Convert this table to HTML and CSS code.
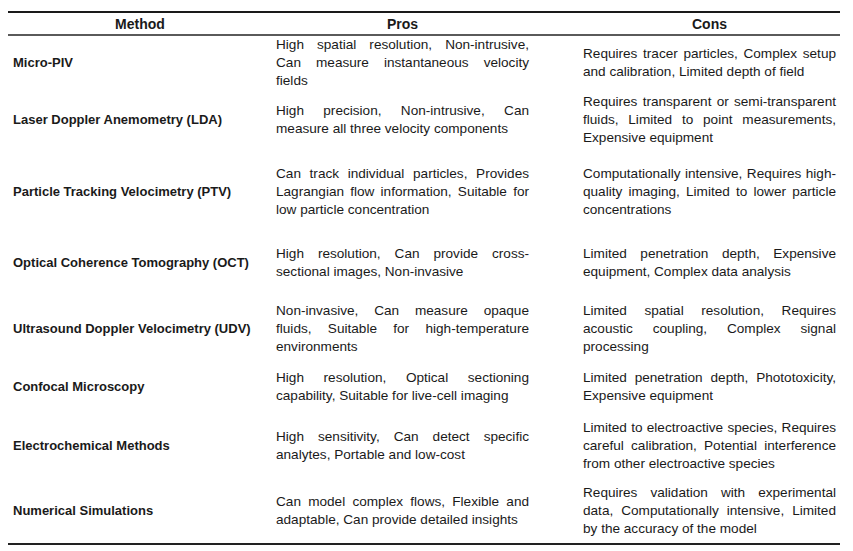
FILE: index.html
```html
<!DOCTYPE html>
<html>
<head>
<meta charset="utf-8">
<link rel="stylesheet" href="styles.css">
</head>
<body>
<div class="tbl">
  <div class="row head">
    <div class="c m">Method</div>
    <div class="c p">Pros</div>
    <div class="c n">Cons</div>
  </div>
  <div class="row r1">
    <div class="c m">Micro-PIV</div>
    <div class="c p">High spatial resolution, Non-intrusive, Can measure instantaneous velocity fields</div>
    <div class="c n">Requires tracer particles, Complex setup and calibration, Limited depth of field</div>
  </div>
  <div class="row r2">
    <div class="c m">Laser Doppler Anemometry (LDA)</div>
    <div class="c p">High precision, Non-intrusive, Can measure all three velocity components</div>
    <div class="c n">Requires transparent or semi-transparent fluids, Limited to point measurements, Expensive equipment</div>
  </div>
  <div class="row r3">
    <div class="c m">Particle Tracking Velocimetry (PTV)</div>
    <div class="c p">Can track individual particles, Provides Lagrangian flow information, Suitable for low particle concentration</div>
    <div class="c n">Computationally intensive, Requires high-quality imaging, Limited to lower particle concentrations</div>
  </div>
  <div class="row r4">
    <div class="c m">Optical Coherence Tomography (OCT)</div>
    <div class="c p">High resolution, Can provide cross-sectional images, Non-invasive</div>
    <div class="c n">Limited penetration depth, Expensive equipment, Complex data analysis</div>
  </div>
  <div class="row r5">
    <div class="c m">Ultrasound Doppler Velocimetry (UDV)</div>
    <div class="c p">Non-invasive, Can measure opaque fluids, Suitable for high-temperature environments</div>
    <div class="c n">Limited spatial resolution, Requires acoustic coupling, Complex signal processing</div>
  </div>
  <div class="row r6">
    <div class="c m">Confocal Microscopy</div>
    <div class="c p">High resolution, Optical sectioning capability, Suitable for live-cell imaging</div>
    <div class="c n">Limited penetration depth, Phototoxicity, Expensive equipment</div>
  </div>
  <div class="row r7">
    <div class="c m">Electrochemical Methods</div>
    <div class="c p">High sensitivity, Can detect specific analytes, Portable and low-cost</div>
    <div class="c n">Limited to electroactive species, Requires careful calibration, Potential interference from other electroactive species</div>
  </div>
  <div class="row r8">
    <div class="c m">Numerical Simulations</div>
    <div class="c p">Can model complex flows, Flexible and adaptable, Can provide detailed insights</div>
    <div class="c n">Requires validation with experimental data, Computationally intensive, Limited by the accuracy of the model</div>
  </div>
</div>
</body>
</html>
```
FILE: styles.css
```css
html, body {
  margin: 0;
  padding: 0;
  background: #ffffff;
}
body {
  font-family: "Liberation Sans", Arial, sans-serif;
  font-size: 13.6px;
  color: #1a1a1a;
}
.tbl {
  margin: 11px 0 0 8px;
  width: 832px;
  border-top: 2px solid #1a1a1a;
  border-bottom: 2px solid #222222;
}
.row {
  display: grid;
  grid-template-columns: 264px 307px 261px;
  align-items: center;
}
.c {
  line-height: 18px;
}
.m {
  padding: 0 5px;
  font-weight: bold;
  font-size: 13px;
}
.p {
  padding: 0 50px 0 4px;
  text-align: justify;
}
.n {
  padding: 0 4px;
  text-align: justify;
}
.head {
  height: 21px;
  border-bottom: 2px solid #5a5a5a;
}
.head .c {
  text-align: center;
  font-weight: bold;
  font-size: 14px;
}
.r1 { height: 50px; }
.r2 { height: 68px; }
.r3 { height: 75px; }
.r4 { height: 68px; }
.r5 { height: 64px; }
.r6 { height: 52px; }
.r7 { height: 66px; }
.r8 { height: 64px; }
```
